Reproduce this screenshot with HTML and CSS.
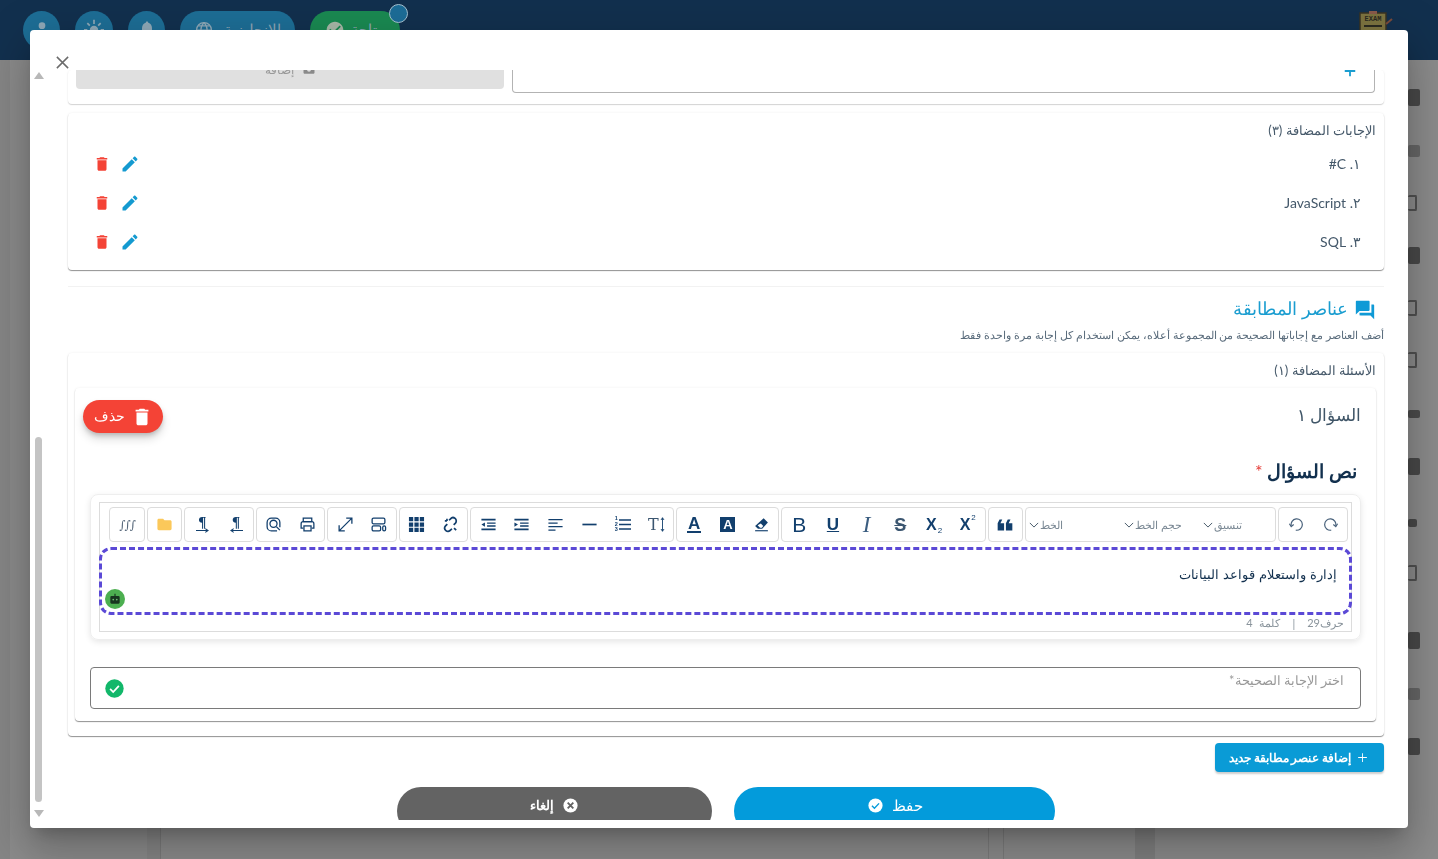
FILE: index.html
```html
<!DOCTYPE html>
<html lang="ar" dir="rtl">
<head>
<meta charset="utf-8">
<title>إضافة سؤال مطابقة</title>
<link rel="stylesheet" href="styles.css">
</head>
<body>
<svg class="defs" width="0" height="0" aria-hidden="true">
  <symbol id="i-trash" viewBox="0 0 24 24"><path d="M6 19c0 1.1.9 2 2 2h8c1.1 0 2-.9 2-2V7H6v12zM19 4h-3.500l-1-1h-5l-1 1H5v2h14V4z"/></symbol>
  <symbol id="i-edit" viewBox="0 0 24 24"><path d="M3 17.250V21h3.750L17.810 9.940l-3.750-3.750L3 17.250zM20.710 7.040c.39-.39.39-1.020 0-1.410l-2.340-2.340c-.39-.39-1.020-.39-1.410 0l-1.830 1.830 3.750 3.750 1.830-1.830z"/></symbol>
  <symbol id="i-check" viewBox="0 0 24 24"><path d="M12 2C6.480 2 2 6.480 2 12s4.480 10 10 10 10-4.480 10-10S17.520 2 12 2zm-2 15l-5-5 1.410-1.410L10 14.170l7.590-7.590L19 8l-9 9z"/></symbol>
</svg>

<div class="page">
  <header class="topbar">
    <span class="hbtn"><svg viewBox="0 0 24 24"><circle cx="12" cy="8" r="4"/><path d="M4 22c0-5 4-7 8-7s8 2 8 7z"/></svg></span>
    <span class="hbtn wide"><svg viewBox="0 0 24 24"><circle cx="12" cy="13" r="5"/><path class="rays" d="M12 1v5M4 5l3 3M20 5l-3 3M0 13h4M20 13h4"/></svg></span>
    <span class="hbtn"><svg viewBox="0 0 24 24"><path d="M12 3c-1 0-1.500.7-1.500 1.500C7.500 5.500 6 8 6 11v5l-2 2v1h16v-1l-2-2v-5c0-3-1.500-5.500-4.500-6.500C13.500 3.700 13 3 12 3z"/></svg></span>
    <span class="hpill lang"><svg viewBox="0 0 24 24"><circle class="ln" cx="12" cy="12" r="9"/><path class="ln" d="M3 12h18M12 3c-5 5-5 13 0 18M12 3c5 5 5 13 0 18M5 7h14M5 17h14"/></svg><span class="hpill-text">الإنجليزية</span></span>
    <span class="hpill status"><span class="badge"></span><svg viewBox="0 0 24 24"><use href="#i-check"/></svg><span class="hpill-text">متاحة</span></span>
    <span class="logo"><svg viewBox="0 0 36 22"><rect x="1" y="2" width="26" height="22" fill="#7d7440" stroke="#3a3322" stroke-width="1.500"/><rect x="10" y="0" width="8" height="3" fill="#8a5a4a"/><text x="14" y="10" text-anchor="middle" class="examt">EXAM</text><path d="M5 15h18" stroke="#2b2a20" stroke-width="2"/><path d="M27 13l6-5" stroke="#7a4a3a" stroke-width="2"/></svg></span>
  </header>
  <main class="backdrop">
    <div class="side">
      <i class="tall"></i><i class="line"></i><i class="out"></i><i class="tall"></i><i class="out tall2"></i><i class="out"></i><i class="dots"></i><i class="tall"></i><i class="small"></i><i class="out"></i>
      <i class="tall sp"></i><i class="line"></i><i class="tall"></i>
    </div>
  </main>
</div>

<div class="modal">
  <button class="close" aria-label="إغلاق"><svg viewBox="0 0 16 16"><path d="M2 2l12 12M14 2L2 14"/></svg></button>
  <div class="sbar"><span class="up"></span><span class="thumb"></span><span class="down"></span></div>
  <div class="scroll">
    <section class="card first">
      <div class="addinput"><svg viewBox="0 0 24 24"><path d="M19 13.200h-5.800V19h-2.400v-5.800H5v-2.400h5.800V5h2.400v5.800H19z"/></svg></div>
      <div class="graybtn"><svg viewBox="0 0 14 14"><rect x="0" y="0" width="14" height="11" rx="1"/><circle cx="7" cy="6" r="2.500" fill="#e0e0e0"/></svg><span>إضافة</span></div>
    </section>

    <section class="card answers dark">
      <h3 class="cardtitle">الإجابات المضافة (٣)</h3>
      <ul class="alist">
        <li><span class="atext">١. C#</span><span class="acts"><svg class="ed"><use href="#i-edit"/></svg><svg class="del"><use href="#i-trash"/></svg></span></li>
        <li><span class="atext">٢. JavaScript</span><span class="acts"><svg class="ed"><use href="#i-edit"/></svg><svg class="del"><use href="#i-trash"/></svg></span></li>
        <li><span class="atext">٣. SQL</span><span class="acts"><svg class="ed"><use href="#i-edit"/></svg><svg class="del"><use href="#i-trash"/></svg></span></li>
      </ul>
    </section>

    <hr class="rule">
    <h2 class="section"><svg viewBox="0 0 24 24"><path d="M21 6h-2v9H6v2c0 .55.45 1 1 1h11l4 4V7c0-.55-.45-1-1-1zm-4 6V3c0-.55-.45-1-1-1H3c-.55 0-1 .45-1 1v14l4-4h10c.55 0 1-.45 1-1z"/></svg>عناصر المطابقة</h2>
    <p class="hint">أضف العناصر مع إجاباتها الصحيحة من المجموعة أعلاه، يمكن استخدام كل إجابة مرة واحدة فقط</p>

    <section class="card questions dark">
      <h3 class="cardtitle">الأسئلة المضافة (١)</h3>
      <div class="card qcard dark">
        <div class="qhead">
          <span class="qname">السؤال ١</span>
          <button class="delbtn"><svg viewBox="0 0 24 24"><use href="#i-trash"/></svg>حذف</button>
        </div>
        <label class="qlabel">نص السؤال <em>*</em></label>
        <div class="editor">
          <div class="editbox">
            <div class="toolbar">
              <div class="grp">
                <button class="tb"><svg viewBox="0 0 24 24" class="s"><path d="M19.500 14A8 8 0 1 0 13 20"/><path d="M22 11l-2.500 4-3.500-3"/></svg></button>
                <button class="tb"><svg viewBox="0 0 24 24" class="s"><path d="M4.500 14A8 8 0 1 1 11 20"/><path d="M2 11l2.500 4 3.500-3"/></svg></button>
              </div>
              <div class="grp sels">
                <span class="sel">تنسيق<svg viewBox="0 0 12 7"><path d="M1 1l5 5 5-5"/></svg></span>
                <span class="sel">حجم الخط<svg viewBox="0 0 12 7"><path d="M1 1l5 5 5-5"/></svg></span>
                <span class="sel">الخط<svg viewBox="0 0 12 7"><path d="M1 1l5 5 5-5"/></svg></span>
              </div>
              <div class="grp">
                <button class="tb"><svg viewBox="0 0 24 24" class="f flipq"><path d="M6 18h3l2-4V6H4v8h4zm9 0h3l2-4V6h-7v8h4z"/></svg></button>
              </div>
              <div class="grp">
                <button class="tb t sc">X<sup>2</sup></button>
                <button class="tb t sc">X<sub>2</sub></button>
                <button class="tb t strike">S</button>
                <button class="tb t ital">I</button>
                <button class="tb t under">U</button>
                <button class="tb t bold">B</button>
              </div>
              <div class="grp">
                <button class="tb"><svg viewBox="0 0 24 24" class="f"><path d="M15 3l6 6-8 9H7l-4-4z"/><path class="hole" d="M6.500 13l3.500 3.500h2.500l2-2.500-3.500-3.500z"/><rect x="3" y="20" width="18" height="1.600"/></svg></button>
                <button class="tb"><span class="boxa">A</span></button>
                <button class="tb"><span class="linea">A</span></button>
              </div>
              <div class="grp">
                <button class="tb"><span class="tt">T</span><svg viewBox="0 0 6 20" class="ttarrow"><path d="M3 1v18M1 4l2-3 2 3M1 16l2 3 2-3"/></svg></button>
                <button class="tb"><span class="nums">1<br>2<br>3</span><svg viewBox="0 0 16 18" class="numlines"><path d="M0 3h16M0 9h16M0 15h16"/></svg></button>
                <button class="tb"><svg viewBox="0 0 24 24" class="s mid"><path d="M2 12h20"/></svg></button>
                <button class="tb"><svg viewBox="0 0 24 24" class="s thin"><path d="M2 5h20M2 10h13M2 15h20M2 20h10"/></svg></button>
                <button class="tb"><svg viewBox="0 0 24 24" class="f"><path d="M2 4h20v2.500H2zM10 9h12v2H10zM10 13h12v2H10zM2 17.500h20V20H2z"/><path d="M2 9v6l5-3z"/></svg></button>
                <button class="tb"><svg viewBox="0 0 24 24" class="f"><path d="M2 4h20v2.500H2zM10 9h12v2H10zM10 13h12v2H10zM2 17.500h20V20H2z"/><path d="M7 9v6l-5-3z"/></svg></button>
              </div>
              <div class="grp">
                <button class="tb"><svg viewBox="0 0 24 24" class="s thk"><path d="M10 6l2-2a4.500 4.500 0 0 1 7 6l-2.500 2.500M14 18l-2 2a4.500 4.500 0 0 1-7-6l2.500-2.500M17 17l3 3M7 4v3M4 7h3"/></svg></button>
                <button class="tb"><svg viewBox="0 0 18 18" class="f"><path d="M1 1h4.500v4.500H1zM6.800 1h4.500v4.500H6.800zM12.500 1H17v4.500h-4.500zM1 6.800h4.500v4.500H1zM6.800 6.800h4.500v4.500H6.800zM12.500 6.800H17v4.500h-4.500zM1 12.500h4.500V17H1zM6.800 12.500h4.500V17H6.800zM12.500 12.500H17V17h-4.500z"/></svg></button>
              </div>
              <div class="grp">
                <button class="tb"><svg viewBox="0 0 24 24" class="s thin"><rect x="3" y="3" width="18" height="8" rx="2"/><rect x="3" y="14" width="12" height="7" rx="2"/><rect x="18" y="14" width="4" height="7" rx="2"/></svg></button>
                <button class="tb"><svg viewBox="0 0 24 24" class="s thin"><path d="M3 21L21 3M13 3h8v8M11 21H3v-8"/></svg></button>
              </div>
              <div class="grp">
                <button class="tb"><svg viewBox="0 0 24 24" class="s thin"><rect x="6" y="3" width="12" height="5"/><path d="M6 17H3v-6a3 3 0 0 1 3-3h12a3 3 0 0 1 3 3v6h-3"/><rect x="7" y="14" width="10" height="7"/></svg></button>
                <button class="tb"><svg viewBox="0 0 24 24" class="s thin"><path d="M17 21H9a6 6 0 0 1-6-6V9a6 6 0 0 1 6-6h6a6 6 0 0 1 6 6v7"/><circle cx="12" cy="11" r="5"/><path d="M16 15l5 5"/></svg></button>
              </div>
              <div class="grp">
                <button class="tb"><span class="para">¶<svg viewBox="0 0 14 5"><path d="M14 2.500H1M4 0.500l-3 2 3 2"/></svg></span></button>
                <button class="tb"><span class="para">¶<svg viewBox="0 0 14 5"><path d="M0 2.500h13M10 0.500l3 2-3 2"/></svg></span></button>
              </div>
              <div class="grp">
                <button class="tb"><svg viewBox="0 0 24 24" class="folder"><path d="M10 4H4c-1.100 0-2 .9-2 2v12c0 1.100.9 2 2 2h16c1.100 0 2-.9 2-2V8c0-1.100-.9-2-2-2h-8l-2-2z"/></svg></button>
              </div>
              <div class="grp">
                <button class="tb"><span class="math">∫∫∫</span></button>
              </div>
            </div>
            <div class="writing">
              <p>إدارة واستعلام قواعد البيانات</p>
              <span class="bot"><svg viewBox="0 0 24 24"><path d="M11 3h2v4h5a2 2 0 0 1 2 2v9a2 2 0 0 1-2 2H6a2 2 0 0 1-2-2V9a2 2 0 0 1 2-2h5z"/><circle class="eye" cx="9" cy="13" r="1.500"/><circle class="eye" cx="15" cy="13" r="1.500"/></svg></span>
            </div>
            <div class="counts"><span>حرف29</span><span class="pipe">|</span><span class="words">كلمة 4</span></div>
          </div>
        </div>
        <div class="answer">
          <span class="answer-label">اختر الإجابة الصحيحة*</span>
          <svg class="answer-ok" viewBox="0 0 24 24"><circle cx="12" cy="12" r="10.500" fill="#12b76a"/><path d="M7 12.500l3.500 3.500 6.500-7" fill="none" stroke="#fff" stroke-width="2"/></svg>
        </div>
      </div>
    </section>

    <div class="addrow"><button class="addbtn"><svg viewBox="0 0 24 24"><path d="M19 12.700h-6.300V19h-1.400v-6.300H5v-1.400h6.300V5h1.400v6.300H19z"/></svg>إضافة عنصر مطابقة جديد</button></div>

    <div class="footer">
      <button class="fbtn save">حفظ<svg viewBox="0 0 24 24"><circle cx="12" cy="12" r="10" fill="#fff"/><path d="M7 12.500l3.500 3.500 6.500-7" fill="none" stroke="#039bdb" stroke-width="2"/></svg></button>
      <button class="fbtn cancel"><svg viewBox="0 0 24 24"><circle cx="12" cy="12" r="10" fill="#fff"/><path d="M8 8l8 8M16 8l-8 8" fill="none" stroke="#636363" stroke-width="2.600"/></svg>إلغاء</button>
    </div>
  </div>
</div>
</body>
</html>
```
FILE: styles.css
```css
* { box-sizing: border-box; }
html, body { height: 100%; }
body {
  margin: 0;
  overflow: hidden;
  font-family: Lato, "Liberation Sans", sans-serif;
  color: #44586a;
  background: #888;
}
.defs { display: block; height: 0; }
button { font: inherit; border: 0; background: none; padding: 0; color: inherit; }
h2, h3, p, ul { margin: 0; padding: 0; font-weight: 400; }
ul { list-style: none; }

/* dimmed page behind the dialog */
.page { height: 859px; display: flex; flex-direction: column; }
.topbar {
  direction: ltr;
  height: 60px;
  flex: none;
  background: #12304e;
  display: flex;
  align-items: flex-start;
  padding: 11px 43px 0 23px;
  gap: 15px;
}
.hbtn {
  width: 37px; height: 38px; border-radius: 50%;
  background: #1d6e96;
  display: flex; justify-content: center;
  padding-top: 8px;
}
.hbtn.wide { width: 38px; }
.hbtn svg { width: 20px; height: 20px; fill: #8fa9b8; }
.hbtn .rays { stroke: #8fa9b8; stroke-width: 2; fill: none; }
.hpill {
  position: relative;
  height: 38px; border-radius: 19px;
  display: flex; align-items: flex-start; justify-content: center; gap: 10px;
  padding-top: 9px;
}
.hpill svg { width: 20px; height: 20px; flex: none; }
.hpill-text { font-size: 15px; line-height: 18px; color: #8fa6b5; }
.lang { width: 115px; background: #1d6e96; }
.lang .ln { fill: none; stroke: #8fa9b8; stroke-width: 1.500; }
.status { width: 90px; background: #1a8a52; gap: 6px; }
.status svg { fill: #a8b8a8; }
.badge {
  position: absolute; right: -8px; top: -7px;
  width: 19px; height: 19px; border-radius: 50%;
  background: #1c6d98; border: 1px solid #a6c2d2;
}
.logo { margin-left: auto; width: 36px; height: 22px; }
.logo svg { width: 36px; height: 22px; display: block; }
.examt { font-family: "Liberation Mono", monospace; font-size: 7px; font-weight: 700; fill: #2b2a20; }

.backdrop {
  flex: 1;
  direction: ltr;
  display: flex;
  justify-content: flex-end;
  background-color: #8b8b8b;
  background-image:
    linear-gradient(90deg,
      #858585 0, #858585 10px, transparent 10px, transparent 147px,
      #858585 147px, #858585 160px, #7a7a7a 160px, #7a7a7a 161px, transparent 161px,
      transparent 988px, #7c7c7c 988px, #7c7c7c 989px, transparent 989px,
      transparent 1003px, #7c7c7c 1003px, #7c7c7c 1004px, transparent 1004px,
      transparent 1135px, #7f7f7f 1135px, #7f7f7f 1155px, transparent 1155px);
}
.side {
  width: 30px;
  padding-top: 29px;
  display: flex;
  flex-direction: column;
  align-items: flex-start;
  filter: blur(.6px);
}
.side i { display: block; height: 17px; width: 12px; margin-bottom: 36px; background: #484848; border-radius: 2px; }
.side .line { height: 12px; background: #666; margin-top: 3px; margin-bottom: 38px; }
.side .out { background: none; border: 2px solid #505050; border-left: 0; height: 16px; width: 9px; }
.side .dots { height: 8px; width: 12px; margin-top: 6px; margin-bottom: 40px; background: #4c4c4c; }
.side .small { height: 8px; width: 9px; margin-top: 8px; margin-bottom: 38px; }
.side .sp { margin-top: 15px; }

/* dialog */
.modal {
  position: fixed;
  left: 30px; top: 30px;
  width: 1378px; height: 798px;
  background: #fff;
  border-radius: 4px;
  box-shadow: 0 11px 15px -7px rgba(0,0,0,.2), 0 24px 38px 3px rgba(0,0,0,.14), 0 9px 46px 8px rgba(0,0,0,.12);
  padding-top: 40px;
  padding-bottom: 8px;
}
.close { position: absolute; left: 25px; top: 25px; width: 15px; height: 15px; display: block; }
.close svg { width: 15px; height: 15px; display: block; fill: none; stroke: #6b6b6b; stroke-width: 1.600; }
.sbar { position: absolute; left: 4px; top: 40px; width: 10px; height: 750px; }
.sbar span { position: absolute; left: 0; }
.up, .down { width: 0; height: 0; border-left: 5px solid transparent; border-right: 5px solid transparent; }
.up { top: 2px; border-bottom: 7px solid #b8b8b8; }
.down { top: 740px; border-top: 7px solid #b8b8b8; }
.sbar .thumb { left: 1px; top: 367px; width: 7px; height: 365px; background: #c4c4c4; border-radius: 4px; }

.scroll {
  height: 750px;
  overflow: hidden;
  padding: 0 24px 0 38px;
  display: flex;
  flex-direction: column;
}
.card { background: #fff; border-radius: 4px; flex: none; }
.card.dark { box-shadow: 0 1px 1px rgba(0,0,0,.42), 0 0 3px rgba(0,0,0,.06); }

.first {
  height: 34px;
  display: flex;
  gap: 8px;
  padding-right: 9px;
  padding-left: 8px;
  box-shadow: 0 1px 1px rgba(0,0,0,.16), 0 0 3px rgba(0,0,0,.05);
  align-items: flex-start;
}
.addinput {
  flex: 1;
  height: 23px;
  border: 1px solid #b3b3b3;
  border-top: 0;
  border-radius: 0 0 4px 4px;
  display: flex;
  justify-content: flex-start;
  align-items: flex-end;
  padding: 0 15px 12px;
}
.addinput svg { width: 18px; height: 18px; fill: #1a9dd0; flex: none; }
.graybtn {
  width: 428px;
  height: 19px;
  background: #e0e0e0;
  border-radius: 0 0 4px 4px;
  display: flex;
  align-items: flex-end;
  justify-content: center;
  gap: 8px;
  padding-bottom: 12px;
  color: #9a9a9a;
  font-size: 12px;
  line-height: 14px;
}
.graybtn svg { width: 14px; height: 11px; fill: #8a8a8a; margin-bottom: 1px; }

.answers { margin-top: 9px; height: 157px; padding: 8px 8px 9px; }
.cardtitle { font-size: 13.200px; line-height: 18px; color: #46596a; }
.alist { margin-top: 5.500px; padding-right: 15px; }
.alist li { height: 39px; display: flex; justify-content: space-between; align-items: center; font-size: 14px; color: #44586a; }
.atext { margin-top: -2px; }
.acts { display: flex; gap: 9px; align-items: center; padding-left: 17px; }
.acts svg { width: 18px; height: 18px; display: block; }
.ed { fill: #149ad0; width: 20px !important; height: 20px !important; }
.del { fill: #f44336; }

.rule { border: 0; height: 1px; background: #f2f2f2; margin: 16px 0 0; flex: none; }
.section {
  margin-top: 7px;
  padding-right: 8px;
  display: flex;
  align-items: center;
  gap: 6px;
  font-size: 18px;
  line-height: 28px;
  color: #1a9dd0;
}
.section svg { width: 22px; height: 22px; fill: #0f9ad6; flex: none; margin-top: 3px; }
.hint { margin-top: 5px; font-size: 11.400px; line-height: 16px; color: #5a6c7c; }

.questions { margin-top: 10px; height: 383px; padding: 8px 8px 15px 7px; }
.qcard { margin-top: 9px; height: 333px; padding: 12px 15px 12px 15px; display: flex; flex-direction: column; }
.qhead { display: flex; justify-content: space-between; align-items: center; height: 33px; }
.qname { font-size: 17px; color: #3f5567; margin-top: -4px; }
.delbtn {
  margin-left: -7px;
  width: 80px; height: 33px;
  border-radius: 17px;
  background: #f44336;
  color: #fff;
  font-size: 14px;
  display: flex; align-items: center; justify-content: center; gap: 6px;
  padding-bottom: 2px;
  box-shadow: 0 3px 5px -1px rgba(0,0,0,.2), 0 6px 10px 0 rgba(0,0,0,.14);
}
.delbtn svg { width: 22px; height: 22px; fill: #fff; margin-top: 2px; }
.qlabel { margin-top: 26px; padding-right: 4px; font-size: 19px; font-weight: 700; line-height: 24px; height: 24px; color: #12304e; }
.qlabel em { color: #e53935; font-style: normal; font-weight: 400; font-size: 18px; line-height: 0; }

.editor {
  margin-top: 11px;
  height: 146px;
  flex: none;
  border-radius: 8px;
  border: 1px solid #eee;
  box-shadow: 0 2px 6px rgba(0,0,0,.1);
  padding: 7px 8px;
}
.editbox { height: 130px; border: 1px solid #dcdcdc; display: flex; flex-direction: column; }
.toolbar { direction: rtl; display: flex; gap: 2.050px; padding: 4px 3px 0 9px; height: 39px; flex: none; }
.grp { display: flex; border: 1px solid #dcdcdc; border-radius: 4px; height: 35px; }
.grp:first-child { padding-left: .6px; }
.tb {
  direction: ltr;
  width: 33.700px; height: 33px;
  display: flex; align-items: center; justify-content: center; gap: 1px;
  color: #123f6d;
}
.tb svg { width: 17px; height: 17px; display: block; }
.s { fill: none; stroke: #47607a; stroke-width: 1.700; }
.s.thin { stroke: #123f6d; stroke-width: 1.800; }
.s.thk { stroke: #123f6d; stroke-width: 2.400; }
.s.mid { stroke: #123f6d; stroke-width: 2.400; }
.f { fill: #123f6d; }
.f .hole { fill: #fff; }
.tb .flipq { transform: rotate(180deg); width: 22px; height: 22px; }
.folder { fill: #fbc85a; }
.t { font-family: "Liberation Sans", sans-serif; line-height: 1; }
.bold { font-size: 21px; color: #123f6d; }
.under { font-size: 17px; font-weight: 700; text-decoration: underline; }
.ital { font-family: "Liberation Serif", serif; font-style: italic; font-size: 23px; color: #3b5d80; }
.strike { font-size: 18px; font-weight: 700; text-decoration: line-through; color: #3b5670; }
.sc { font-size: 16px; font-weight: 700; gap: 0; }
.sc sub, .sc sup { font-size: 8px; font-weight: 400; line-height: 0; margin: 0 0 0 1px; }
.sc sub { align-self: flex-end; margin-bottom: 10px; }
.sc sup { align-self: flex-start; margin-top: 10px; }
.linea { font-size: 17px; font-weight: 700; line-height: 15px; border-bottom: 2px solid #123f6d; color: #123f6d; font-family: "Liberation Sans", sans-serif; padding: 0 1px; }
.boxa { width: 15px; height: 15px; background: #123f6d; color: #fff; font-size: 13px; font-weight: 700; line-height: 15px; text-align: center; font-family: "Liberation Sans", sans-serif; }
.tt { font-family: "DejaVu Serif", serif; font-size: 16px; line-height: 1; color: #3b5670; }
.tb .ttarrow { width: 5px; height: 15px; fill: none; stroke: #123f6d; stroke-width: 1.200; }
.nums { font-size: 5.500px; line-height: 5.500px; font-family: "Liberation Sans", sans-serif; color: #123f6d; font-weight: 700; }
.tb .numlines { width: 12px; height: 15px; fill: none; stroke: #123f6d; stroke-width: 2; }
.para { display: flex; flex-direction: column; align-items: center; font-family: "Liberation Serif", serif; font-size: 15px; line-height: 12px; font-weight: 700; color: #123f6d; }
.tb .para svg { width: 13px; height: 5px; fill: none; stroke: #123f6d; stroke-width: 1.100; }
.math { font-family: "DejaVu Serif", serif; font-style: italic; font-size: 12px; color: #56677a; letter-spacing: -1px; }

.sels {
  width: 251px;
  display: grid;
  grid-template-columns: 60px 119px auto;
  padding-right: 33px;
  align-items: center;
  justify-items: start;
  font-size: 11px;
  color: #7a8894;
}
.sel { display: inline-flex; align-items: center; gap: 0; white-space: nowrap; line-height: 14px; }
.sel svg { width: 10px; height: 6px; margin-right: 1px; fill: none; stroke: #4a5c6c; stroke-width: 1.200; }

.writing {
  position: relative;
  margin: 5px -1px 0 -1px;
  height: 68px;
  flex: none;
  border: 3px dashed #5b49d6;
  border-radius: 12px;
  padding: 14px 12px 0;
  font-family: "DejaVu Serif", serif;
  font-size: 12.700px;
  line-height: 22px;
  color: #12304e;
}
.bot {
  position: absolute; left: 3px; bottom: 3px;
  width: 20px; height: 20px; border-radius: 50%;
  background: #4caf50;
  display: flex; align-items: center; justify-content: center;
}
.bot svg { width: 14px; height: 14px; fill: #17361f; }
.bot .eye { fill: #6dbf6f; }
.counts {
  display: flex; align-items: center;
  padding-right: 7px;
  height: 16px;
  font-size: 11px;
  color: #8a949c;
}
.pipe { margin: 0 12px; }
.words { word-spacing: 4px; }

.answer {
  margin-top: 27px;
  height: 42px;
  flex: none;
  border: 1px solid #7a7a7a;
  border-radius: 4px;
  display: flex;
  justify-content: space-between;
  padding: 0 16px 0 13px;
}
.answer-label { font-size: 12.700px; line-height: 18px; margin-top: 3px; color: #9a9a9a; }
.answer-ok { width: 21px; height: 21px; margin-top: 10px; }

.addrow { margin-top: 7px; display: flex; flex: none; }
.addbtn {
  width: 169px; height: 29px;
  background: #0a9bd6;
  border-radius: 4px;
  color: #fff;
  font-size: 11.900px;
  font-weight: 700;
  display: flex; align-items: center; justify-content: center; gap: 4px;
  white-space: nowrap;
  box-shadow: 0 2px 2px rgba(0,0,0,.2);
}
.addbtn svg { width: 15px; height: 15px; fill: #fff; flex: none; }

.footer { margin-top: 15px; display: flex; justify-content: center; gap: 22px; flex: none; }
.fbtn {
  height: 48px;
  border-radius: 24px;
  color: #fff;
  font-size: 15px;
  display: flex; align-items: flex-start; justify-content: center; gap: 8px;
  padding-top: 9px;
  line-height: 18px;
}
.fbtn svg { width: 17px; height: 17px; flex: none; margin-top: 1px; }
.save { width: 321px; background: #039bdb; }
.cancel { width: 315px; background: #636363; font-size: 13px; font-weight: 700; }
```
